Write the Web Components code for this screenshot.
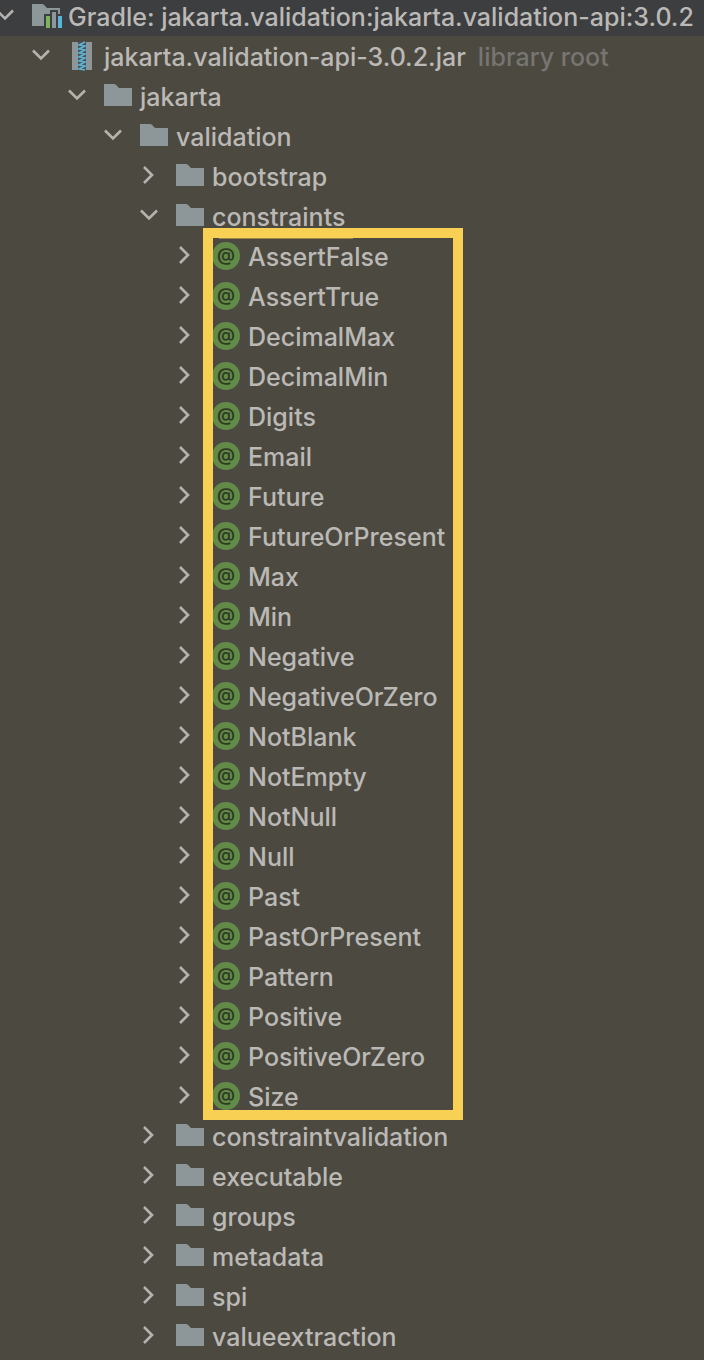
<!DOCTYPE html>
<html lang="en">
<head>
<meta charset="utf-8">
<title>External Libraries</title>
<style>
  body {
    margin: 0;
    min-height: 100vh;
    overflow-x: hidden;
    background: #4c4940;
    color: #bbb9b6;
    font: 450 25px/40px Inter, "Liberation Sans", sans-serif;
  }
</style>
</head>
<body>
<project-tree></project-tree>

<script>
const icons = {
  folder: `<svg width="28" height="28" viewBox="0 0 28 28"><path d="M0 2h10q2 0 3 2l2 2h13v18H0z" fill="#8d9699"/></svg>`,
  gradle: `<svg width="32" height="28" viewBox="0 0 32 28">
    <path d="M0 2h10q2 0 3 2l2 2h13v6h-2V8h-8v4h-6v12H0z" fill="#8d9699"/>
    <path d="M14 14h4v12h-4z" fill="#7cb45c"/>
    <path d="M20 10h4v16h-4z" fill="#8d9699"/>
    <path d="M26 14h4v12h-4z" fill="#5cb4dc"/>
  </svg>`,
  jar: `<svg width="28" height="28" viewBox="0 0 28 28">
    <path d="M4 0h20v28H4z" fill="#8d9699"/>
    <path d="M10 0h8v28h-8z" fill="#46555a"/>
    <path d="M17 0l-6 3 6 1-6 3 6 1-6 3 6 1-6 3 6 1-6 3 6 1-6 3 6 1-6 3 6 1" fill="none" stroke="#5fb3d3" stroke-width="1.5"/>
  </svg>`,
  annotation: `<span class="annotation">@</span>`,
};

// One row of the tree; nested nodes go in the default slot.
class TreeNode extends HTMLElement {
  constructor() {
    super();
    this.attachShadow({ mode: "open" });
  }

  connectedCallback() {
    const label = this.getAttribute("label");
    const note = this.getAttribute("note") || "";
    const icon = icons[this.getAttribute("icon") || "folder"];

    this.shadowRoot.innerHTML = `
      <style>
        :host {
          display: block;
        }
        .row {
          display: flex;
          height: 40px;
          white-space: nowrap;
        }
        :host([root]) .row {
          margin-top: -4px;
          background: #3d3e40;
        }
        button {
          flex: none;
          width: 32px;
          padding: 0;
          border: 0;
          background: none;
          color: inherit;
        }
        svg {
          display: block;
          overflow: visible;
        }
        .chevron {
          fill: none;
          stroke: #b5b3af;
          stroke-width: 2.6;
        }
        .down, :host([open]) .right {
          display: none;
        }
        :host([open]) .down {
          display: inline;
        }
        .icon {
          flex: none;
          width: 28px;
          margin: 6px 8px 0 0;
        }
        .annotation {
          display: block;
          height: 28px;
          border-radius: 50%;
          background: #628b47;
          color: #2d3b24;
          font-size: 18px;
          font-weight: 600;
          line-height: 26px;
          text-align: center;
        }
        .label {
          padding-top: 1px;
        }
        .note {
          margin-left: 12px;
          padding-top: 1px;
          color: #777572;
        }
        .children {
          padding-left: 36px;
        }
        :host(:not([open])) .children {
          display: none;
        }
      </style>
      <div class="row">
        <button type="button" aria-label="Toggle ${label}">
          <svg class="chevron" width="32" height="40" viewBox="0 0 32 40">
            <path class="right" d="M0 11L8 19L0 27"/>
            <path class="down" d="M-3 14.5L5 22.5L13 14.5"/>
          </svg>
        </button>
        <span class="icon">${icon}</span>
        <span class="label">${label}</span>
        ${note && `<span class="note">${note}</span>`}
      </div>
      <div class="children"><slot></slot></div>
    `;

    this.shadowRoot
      .querySelector("button")
      .addEventListener("click", () => this.toggleAttribute("open"));
  }
}

customElements.define("tree-node", TreeNode);

// Yellow frame drawn over the nodes it wraps.
class MarkedGroup extends HTMLElement {
  constructor() {
    super();
    this.attachShadow({ mode: "open" });
    this.shadowRoot.innerHTML = `
      <style>
        :host {
          display: block;
          position: relative;
        }
        .frame {
          position: absolute;
          box-sizing: border-box;
          top: -8px;
          bottom: -4px;
          left: 23px;
          width: 260px;
          border: 10px solid #f8d053;
          pointer-events: none;
        }
        .frame::before {
          content: "";
          display: block;
          width: 134px;
          height: 1px;
          margin-left: 6px;
          background: #9b8647;
        }
      </style>
      <slot></slot>
      <div class="frame"></div>
    `;
  }
}

customElements.define("marked-group", MarkedGroup);

class ProjectTree extends HTMLElement {
  constructor() {
    super();
    this.attachShadow({ mode: "open" });
  }

  connectedCallback() {
    const annotations = [
      "AssertFalse", "AssertTrue", "DecimalMax", "DecimalMin", "Digits", "Email",
      "Future", "FutureOrPresent", "Max", "Min", "Negative", "NegativeOrZero",
      "NotBlank", "NotEmpty", "NotNull", "Null", "Past", "PastOrPresent",
      "Pattern", "Positive", "PositiveOrZero", "Size",
    ];
    const packages = [
      "constraintvalidation", "executable", "groups", "metadata", "spi", "valueextraction",
    ];

    this.shadowRoot.innerHTML = `
      <style>
        :host {
          display: flow-root;
          overflow: hidden;
          padding-bottom: 4px;
        }
      </style>
      <tree-node root open icon="gradle" label="Gradle: jakarta.validation:jakarta.validation-api:3.0.2">
        <tree-node open icon="jar" label="jakarta.validation-api-3.0.2.jar" note="library root">
          <tree-node open label="jakarta">
            <tree-node open label="validation">
              <tree-node label="bootstrap"></tree-node>
              <tree-node open label="constraints">
                <marked-group>
                  ${annotations.map((name) => `<tree-node icon="annotation" label="${name}"></tree-node>`).join("")}
                </marked-group>
              </tree-node>
              ${packages.map((name) => `<tree-node label="${name}"></tree-node>`).join("")}
            </tree-node>
          </tree-node>
        </tree-node>
      </tree-node>
    `;
  }
}

customElements.define("project-tree", ProjectTree);
</script>
</body>
</html>
